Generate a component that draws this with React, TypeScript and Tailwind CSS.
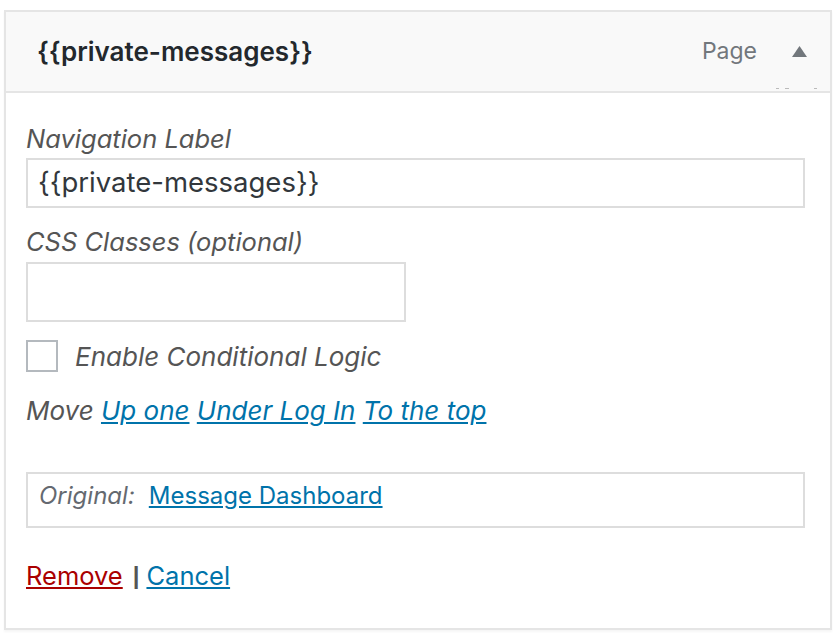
import React from "react";

const font = { fontFamily: "Inter, 'Noto Sans', sans-serif" };

export default function App() {
  return (
    <div className="min-h-[636px] w-[838px] bg-white pl-[4px] pt-[10px]" style={font}>
      <div className="box-border h-[620px] w-[828px] border-2 border-[#e5e5e5] bg-white shadow-[0_2px_2px_rgba(0,0,0,0.04)]">
        {/* header */}
        <div className="relative flex h-[81px] items-center border-b-2 border-[#e5e5e5] bg-[#f9f9f9] pl-[31px] pr-[23px]">
          <h3 className="flex-1 text-[26px] font-semibold text-[#23282d]">{"{{private-messages}}"}</h3>
          <span className="text-[23px] text-[#72777c]">Page</span>
          <svg width="15" height="11" viewBox="0 0 15 11" className="ml-[35px]">
            <polygon points="7.5,0 15,11 0,11" fill="#72777c" />
          </svg>
          <span className="absolute left-[770px] top-[76px] h-[1px] w-[3px] bg-[#bbb]" />
          <span className="absolute left-[779px] top-[76px] h-[1px] w-[4px] bg-[#bbb]" />
          <span className="absolute left-[808px] top-[76px] h-[1px] w-[3px] bg-[#bbb]" />
        </div>

        {/* body */}
        <div className="pl-[20px] pr-[25px] pt-[28px]">
          <label className="block text-[25.5px] italic leading-[36px] text-[#555]">Navigation Label</label>
          <div className="mt-[1px] box-border flex h-[50px] w-full items-center border-2 border-[#ddd] px-[10px] text-[27.5px] text-[#32373c]">
            {"{{private-messages}}"}
          </div>

          <label className="mt-[16px] block text-[25.5px] italic leading-[36px] text-[#555]">CSS Classes (optional)</label>
          <div className="mt-[2px] box-border h-[60px] w-[380px] border-2 border-[#ddd]" />

          <div className="mt-[18px] flex h-[32px] items-center gap-[17px]">
            <span className="box-border h-[32px] w-[32px] border-2 border-[#b4b9be] bg-white" />
            <span className="text-[26px] italic text-[#555]">Enable Conditional Logic</span>
          </div>

          <p className="mt-[21px] text-[26px] italic leading-[36px] text-[#555]">
            Move{" "}
            <a className="text-[#0073aa] underline">Up one</a>{" "}
            <a className="text-[#0073aa] underline">Under Log In</a>{" "}
            <a className="text-[#0073aa] underline">To the top</a>
          </p>

          <div className="mt-[43px] box-border h-[56px] w-full border-2 border-[#ddd] pl-[11px] pt-[4px] text-[24px] leading-[36px]">
            <span className="italic text-[#646970]">Original:</span>
            <a className="ml-[14px] text-[#0073aa] underline">Message Dashboard</a>
          </div>

          <p className="mt-[30px] flex items-center text-[25.5px] leading-[36px] text-[#555]">
            <a className="text-[#a00] underline">Remove</a>
            <span className="ml-[10px] mr-[7px] text-[24px] font-bold" style={{ fontFamily: "'Liberation Sans', sans-serif" }}>|</span>
            <a className="text-[#0073aa] underline">Cancel</a>
          </p>
        </div>
      </div>
    </div>
  );
}
